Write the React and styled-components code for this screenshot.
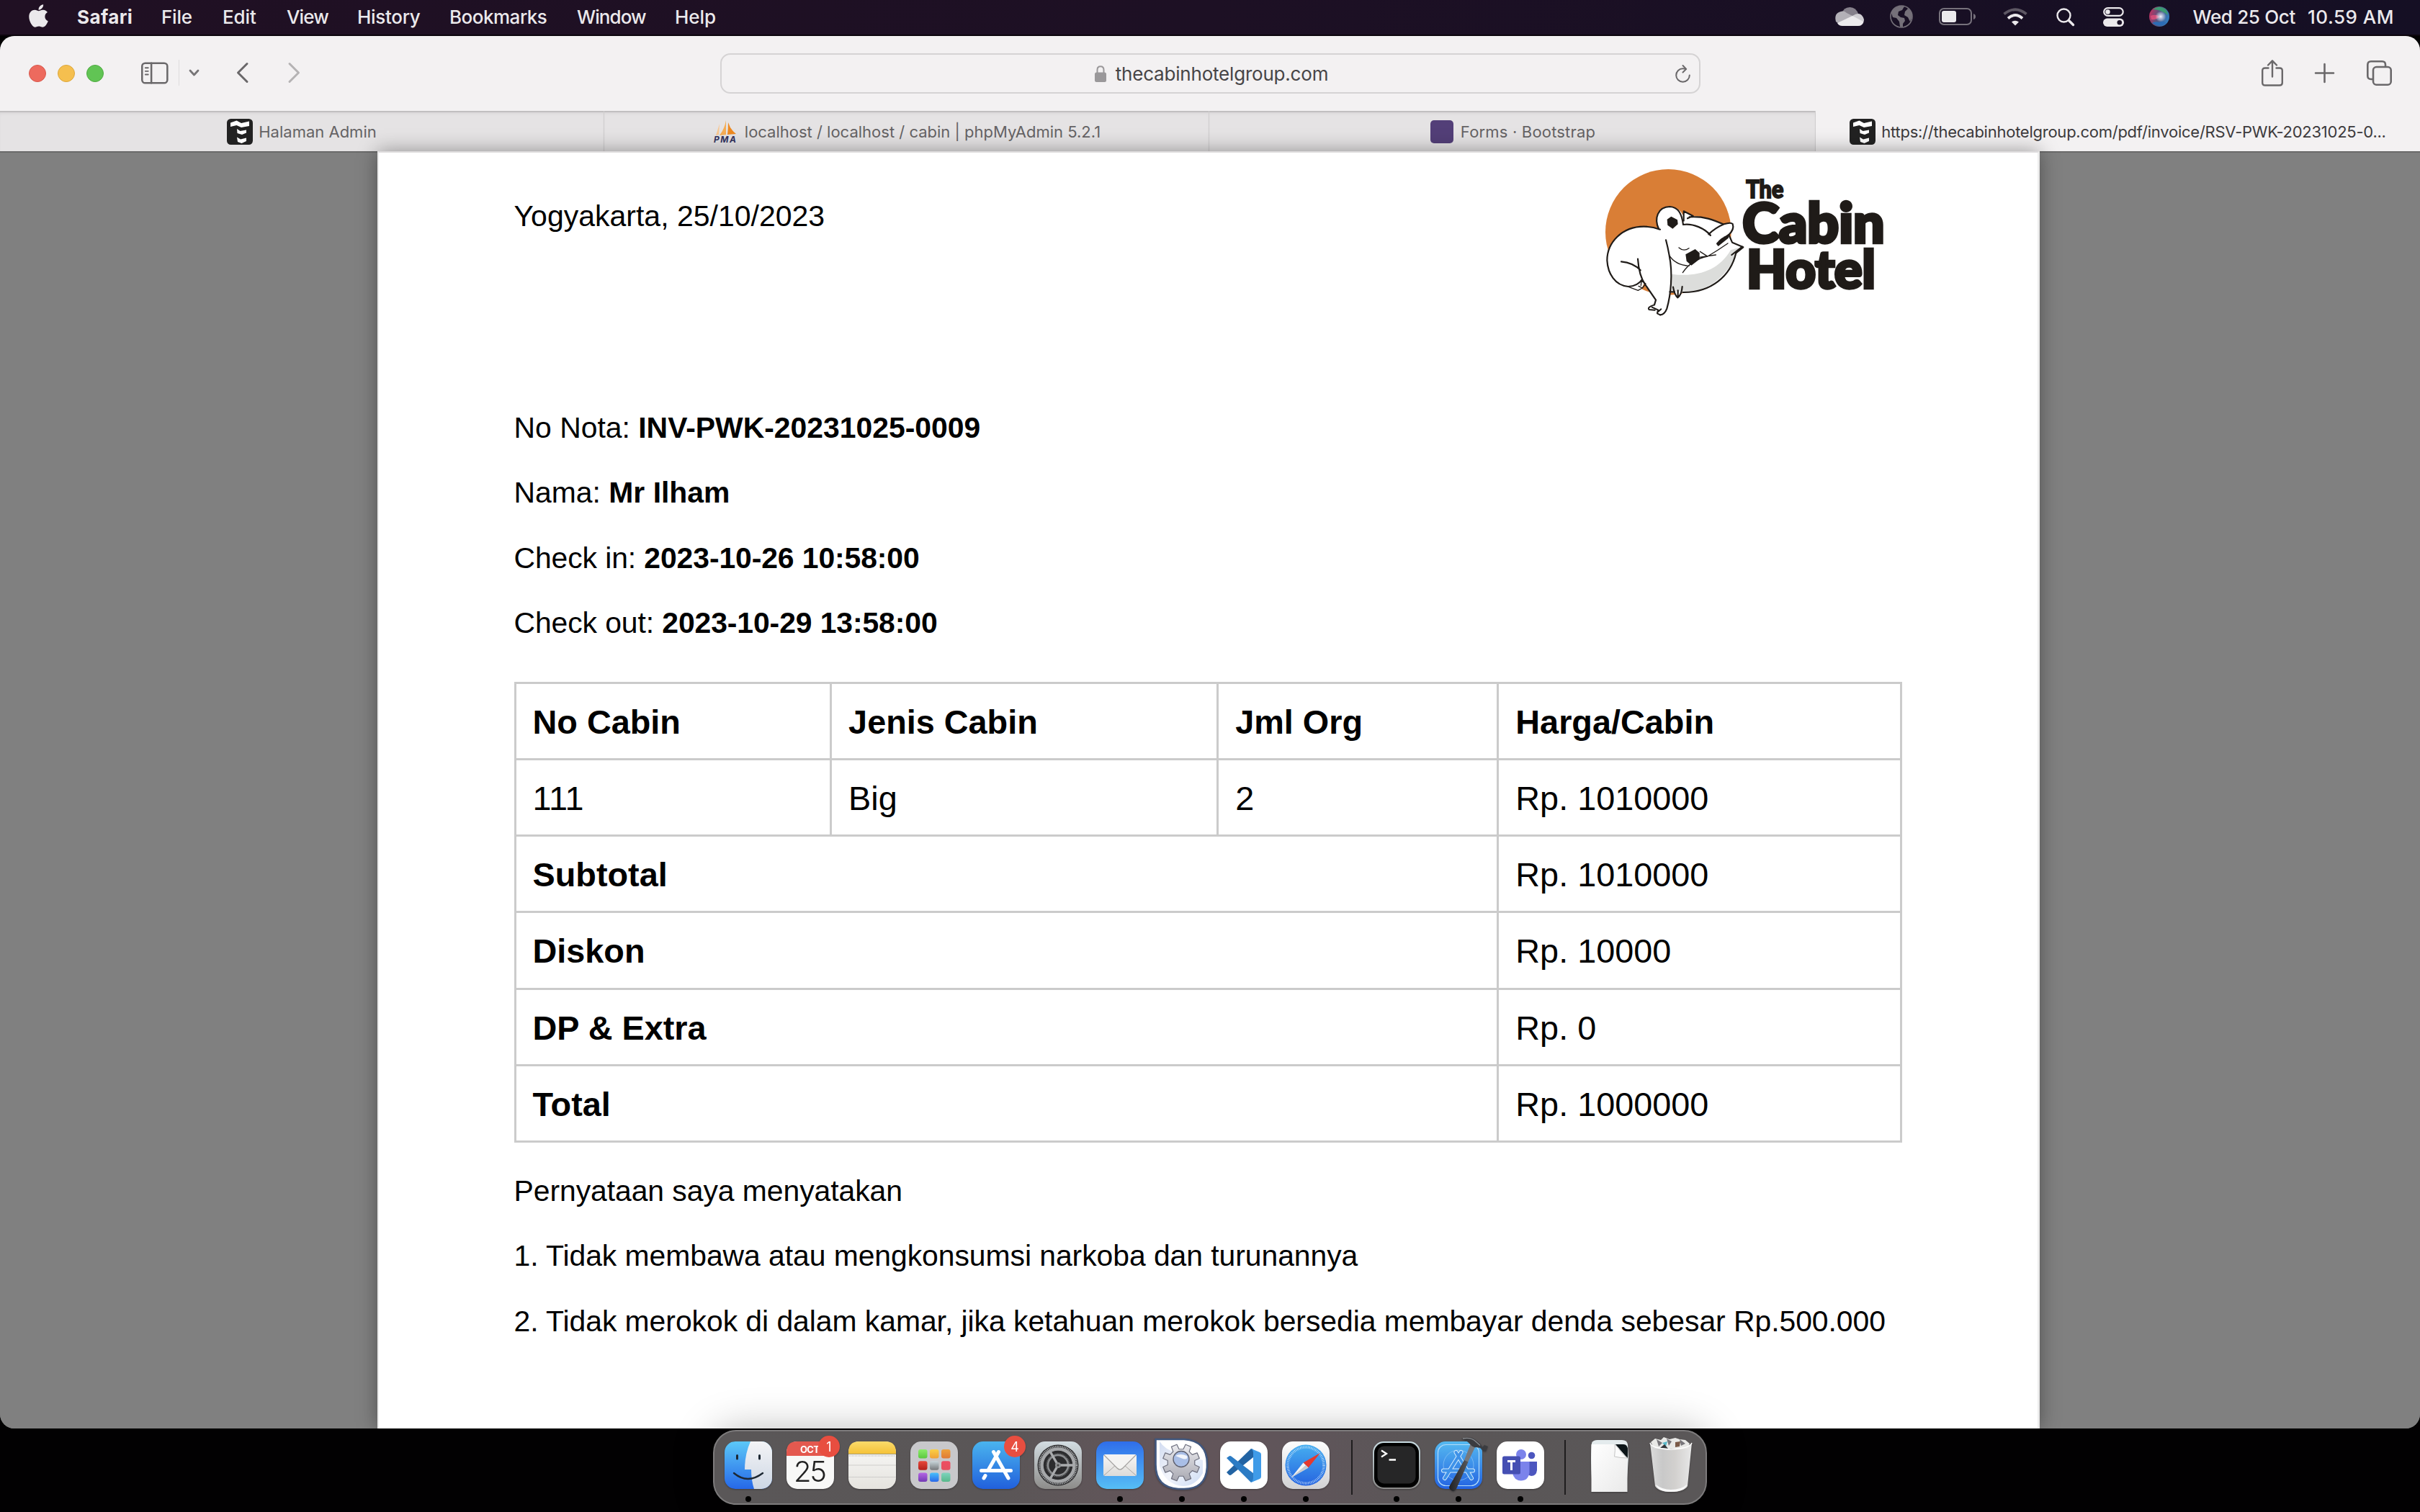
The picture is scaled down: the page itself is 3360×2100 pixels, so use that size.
import React from "react";
import styled, { createGlobalStyle } from "styled-components";
import { FaApple } from "react-icons/fa";

const GlobalStyle = createGlobalStyle`
  * { box-sizing: border-box; }
  body { margin: 0; background: #020102; }
`;

const ui = `Inter, "Noto Sans", sans-serif`;
const doc = `"Liberation Sans", Arial, sans-serif`;

/* ---------- desktop ---------- */

const Desktop = styled.div`
  width: 3360px;
  height: 2100px;
  display: flex;
  flex-direction: column;
  align-items: stretch;
  overflow: hidden;
  background: #020102;
  font-family: ${ui};
`;

/* ---------- menu bar ---------- */

const MenuBar = styled.header`
  height: 50px;
  flex: none;
  padding: 0 36px 2px 41px;
  display: flex;
  align-items: center;
  justify-content: space-between;
  background: linear-gradient(90deg, #201023 0%, #1d1024 50%, #150f24 100%);
  border-bottom: 2px solid #0c050d;
  color: #ebe9ec;
  font-size: 26px;
  font-weight: 500;
  line-height: 45px;
  white-space: pre;
`;

const MenuGroup = styled.nav`
  display: flex;
  align-items: center;
`;

const AppleMenu = styled.span`
  width: 66px;
  height: 45px;
  display: flex;
  align-items: center;
  padding-bottom: 2px;
  svg { width: 27px; height: 36px; margin-left: -1px; }
`;

const MenuItem = styled.span`
  width: ${(p) => p.$w}px;
  font-weight: ${(p) => (p.$bold ? 700 : 500)};
  letter-spacing: ${(p) => p.$ls}px;
`;

const StatusIcon = styled.svg`
  flex: none;
  overflow: visible;
  margin-right: ${(p) => p.$after}px;
`;

const ClockPart = styled.span`
  letter-spacing: ${(p) => p.$ls}px;
  margin-left: ${(p) => p.$before || 0}px;
`;

/* ---------- browser window ---------- */

const BrowserWindow = styled.main`
  height: 1934px;
  flex: none;
  display: flex;
  flex-direction: column;
  border-radius: 20px;
  overflow: hidden;
  background: #808080;
`;

const Toolbar = styled.div`
  height: 104px;
  flex: none;
  padding: 0 39px 0 40px;
  display: grid;
  grid-template-columns: 1fr 1361px 1fr;
  align-items: center;
  background: #f3f1f2;
  color: #6a686a;
`;

const ToolGroup = styled.div`
  display: flex;
  align-items: center;
  justify-content: ${(p) => (p.$end ? "flex-end" : "flex-start")};
  padding-bottom: 2px;
`;

const TrafficLight = styled.span`
  width: 24px;
  height: 24px;
  margin: 2px 16px 0 0;
  border-radius: 50%;
  background: ${(p) => p.$color};
  border: 1px solid ${(p) => p.$rim};
`;

const ToolIcon = styled.svg`
  flex: none;
  overflow: visible;
  fill: none;
  stroke: ${(p) => p.$tone || "#6a686a"};
  stroke-linecap: round;
  stroke-linejoin: round;
  margin-left: ${(p) => p.$before || 0}px;
`;

const ToolDivider = styled.span`
  width: 1px;
  height: 36px;
  margin-left: 14px;
  background: #dedcdd;
`;

const AddressBar = styled.div`
  height: 56px;
  display: grid;
  grid-template-columns: 1fr auto 1fr;
  align-items: center;
  padding: 1px 12px 0 14px;
  border: 2px solid #d5d3d4;
  border-radius: 14px;
  color: #474547;
`;

const AddressText = styled.div`
  display: flex;
  align-items: center;
  gap: 12px;
  grid-column: 2;
  font-size: 26px;
  line-height: 50px;
  letter-spacing: -0.2px;
`;

const ReloadSlot = styled.div`
  display: flex;
  justify-content: flex-end;
`;

const TabBar = styled.div`
  height: 56px;
  flex: none;
  display: grid;
  grid-template-columns: 839px 840px 842px 1fr;
  background: #e5e3e4;
`;

const Tab = styled.div`
  display: flex;
  align-items: center;
  justify-content: center;
  gap: ${(p) => p.$gap || 8}px;
  padding: 2px 0 0 ${(p) => p.$shift || 0}px;
  min-width: 0;
  white-space: nowrap;
  font-size: 22px;
  line-height: 40px;
  letter-spacing: ${(p) => p.$ls || 0}px;
  color: ${(p) => (p.$active ? "#3c3a3c" : "#656365")};
  background: ${(p) => (p.$active ? "#f3f1f2" : "transparent")};
  border-right: ${(p) => (p.$active ? "none" : "1px solid #cfcdce")};
  box-shadow: ${(p) => (p.$active ? "none" : "inset 0 2px 0 #c1bfc0, inset 0 5px 4px -2px #d4d2d3")};
`;

const Favicon = styled.svg`
  flex: none;
  overflow: visible;
`;

/* ---------- document ---------- */

const Viewer = styled.div`
  flex: 1;
  min-height: 0;
  display: flex;
  justify-content: center;
  padding-right: 4px;
  background: #808080;
  box-shadow: inset 0 2px 0 #6a6a6a;
`;

const Sheet = styled.article`
  width: 2308px;
  padding: 0 187px 0 187.5px;
  background: #fff;
  border: solid #ececec;
  border-width: 0 3px 0 2px;
  border-top: 2px solid #dddbdc;
  box-shadow: 0 0 26px rgba(0, 0, 0, 0.38);
  color: #000;
  font-family: ${doc};
`;

const SheetHeader = styled.header`
  height: 337px;
  display: flex;
  justify-content: space-between;
  align-items: flex-start;
`;

const DateLine = styled.p`
  margin: 43px 0 0;
  font-size: 41px;
  line-height: 90.3px;
`;

const Logo = styled.svg`
  flex: none;
  width: 450px;
  height: 248px;
  margin-right: -7px;
`;

const Line = styled.p`
  margin: 0;
  font-size: 40.9px;
  line-height: 90.3px;
  white-space: nowrap;
  letter-spacing: ${(p) => p.$ls || 0}px;
`;

const Table = styled.table`
  width: 1927px;
  margin: 37px 0 22px 0;
  border-collapse: collapse;
  table-layout: fixed;
  font-size: 46.8px;
  line-height: 60px;
`;

const Row = styled.tr`
  height: ${(p) => p.$h || 106}px;
`;

const Cell = styled.td`
  border: 3px solid #cbcbcb;
  padding: 2px 0 0 23px;
  text-align: left;
  vertical-align: middle;
  font-weight: ${(p) => (p.$bold ? 700 : 400)};
`;

/* ---------- dock ---------- */

const Dock = styled.footer`
  position: relative;
  align-self: center;
  flex: none;
  width: 1380px;
  height: 104px;
  margin-top: 2px;
  padding: 14px 14px 0;
  display: flex;
  align-items: flex-start;
  gap: 20px;
  border: 2px solid #7d7b7c;
  border-radius: 32px;
  background: linear-gradient(90deg, #5a5758 0%, #5a5657 28%, #63555a 45%, #5f555a 60%, #5a5657 72%, #5a5758 100%);
  box-shadow: 0 0 56px rgba(0, 0, 0, 0.27);
`;

const DockItem = styled.div`
  width: 66px;
  display: flex;
  flex-direction: column;
  align-items: center;
  gap: 10px;
`;

const DockIcon = styled.svg`
  width: 66px;
  height: 66px;
  overflow: visible;
  filter: drop-shadow(0 1px 1px rgba(0, 0, 0, 0.3));
`;

const RunningDot = styled.span`
  width: 8px;
  height: 8px;
  border-radius: 50%;
  background: #000;
`;

const DockDivider = styled.span`
  width: 2px;
  height: 76px;
  margin: -2px 8px 0 ${(p) => p.$left}px;
  background: #1f1d1e;
`;

/* ---------- drawings ---------- */

const CabinFavicon = () => (
  <Favicon width="36" height="36" viewBox="0 0 36 36">
    <rect width="36" height="36" rx="5.5" fill="#222" />
    <path d="M5 5.500L13.500 2.500L20 6L31 3.500V10L20 12L13.500 9L5 11Z" fill="#fff" />
    <path d="M14 14L18.500 17L27 15.500V19.500L21 22L14.500 20Z" fill="#fff" />
    <path d="M14 25.500L19 28.500L27 26.500V31L20.500 34L15 32Z" fill="#fff" />
  </Favicon>
);

const PmaFavicon = () => (
  <Favicon width="32" height="32" viewBox="0 0 32 32">
    <path d="M8 5L3 21L7 20Z" fill="#f9c790" />
    <path d="M17 0Q15 12 8 21L17 20Z" fill="#f5ad55" />
    <path d="M20 3Q20 13 19 20L31 19Q23 13 20 3Z" fill="#ee8a22" />
    <text x="0" y="31" fontFamily="Inter, sans-serif" fontSize="12" fontWeight="700" fontStyle="italic" fill="#33335f" textLength="31">PMA</text>
  </Favicon>
);

const BootstrapFavicon = () => (
  <Favicon width="32" height="32" viewBox="0 0 32 32">
    <rect width="32" height="32" rx="5" fill="#533f78" />
  </Favicon>
);

const HotelLogo = () => (
  <Logo viewBox="0 6 1350 744">
    <circle cx="352" cy="337" r="262" fill="#d97e36" />
    <path
      d="M102 408C135 345 190 312 252 313Q290 314 316 324C290 280 305 232 358 231Q398 234 414 268L416 248L456 270C510 272 555 290 582 304Q610 296 620 300Q630 312 604 350L620 380L662 398L634 428C610 520 540 592 405 590L392 608L378 588L358 590Q354 640 342 664Q330 682 318 682L268 652L300 622L250 552L240 575Q215 590 190 565C120 555 80 480 102 408Z"
      fill="#fff"
    />
    <path d="M366 512C470 526 560 500 612 412L644 402C640 440 600 500 560 534Q495 590 405 584L364 582Z" fill="#dcdddb" />
    <g fill="none" stroke="#1f1b18" strokeWidth="6.500" strokeLinecap="round" strokeLinejoin="round">
      <path d="M318 326Q285 314 250 314C160 314 97 380 97 455C100 510 130 560 185 564Q225 562 243 534" />
      <path d="M312 324C292 280 308 232 358 231C395 233 408 262 414 306C455 300 505 322 528 351" />
      <path d="M416 250V290M416 250L455 270L432 280M440 274C500 270 540 286 580 304" />
      <path d="M520 346Q550 318 584 304Q612 295 620 303Q628 325 604 348Q580 362 556 384" />
      <path d="M604 348L618 380L664 400L634 424" />
      <path d="M634 424C612 520 530 590 412 588M378 586L358 586" />
      <path d="M372 566Q378 600 391 610Q408 598 410 564M392 580V606" />
      <path d="M342 370Q350 400 356 434C372 510 362 600 346 656Q336 682 318 682" />
      <path d="M356 434Q380 474 438 478M412 506Q450 450 516 438Q560 412 600 384M480 442L550 432M396 402Q416 420 438 404M484 418L512 436" strokeWidth="4" />
      <path d="M156 460Q205 464 236 496M225 449Q230 520 256 556L300 620L294 640" />
      <path d="M294 640Q262 650 272 660L296 662M284 650L310 662L306 672L322 658M318 682L306 676" strokeWidth="6" />
      <path d="M188 566L226 580L244 570L228 562M244 570L258 552L240 540L238 560" strokeWidth="4" />
      <path d="M660 398L616 432" />
    </g>
    <path d="M347 284L364 272L390 286L392 304L370 323L349 308Z" fill="#1f1b18" />
    <path d="M424 430L464 408L482 424V450L448 476L428 458Z" fill="#1f1b18" />
    <path d="M552 386Q570 356 606 350L602 362L560 396Z" fill="#1f1b18" />
    <g fontFamily="Lato, sans-serif" fontWeight="900" fill="#1f1b18" stroke="#1f1b18" strokeLinejoin="miter">
      <text x="676" y="196" fontSize="102" strokeWidth="6" textLength="156" lengthAdjust="spacingAndGlyphs">The</text>
      <text x="661" y="380" fontSize="228" strokeWidth="13" textLength="592" lengthAdjust="spacingAndGlyphs">Cabin</text>
      <text x="678" y="570" fontSize="216" strokeWidth="13" textLength="536" lengthAdjust="spacingAndGlyphs">Hotel</text>
    </g>
  </Logo>
);

const tile = (fill) => <rect width="66" height="66" rx="15" fill={fill} />;

const Gradient = ({ id, from, to }) => (
  <linearGradient id={id} x1="0" y1="0" x2="0" y2="1">
    <stop offset="0" stopColor={from} />
    <stop offset="1" stopColor={to} />
  </linearGradient>
);

const Badge = ({ n }) => (
  <g>
    <circle cx="59" cy="7" r="15" fill="#e84e40" />
    <text x="59" y="13.5" textAnchor="middle" fontFamily="Inter, sans-serif" fontSize="18" fill="#fff">{n}</text>
  </g>
);

const FinderIcon = () => (
  <DockIcon viewBox="0 0 66 66">
    <defs>
      <Gradient id="finderA" from="#5bc8f8" to="#2668e8" />
      <Gradient id="finderB" from="#f4f4f6" to="#cdd7e4" />
      <clipPath id="finderClip"><rect width="66" height="66" rx="15" /></clipPath>
    </defs>
    <g clipPath="url(#finderClip)">
      <rect width="66" height="66" fill="url(#finderA)" />
      <path d="M36 0Q28 18 28 39H37Q37 54 41 66H66V0Z" fill="url(#finderB)" />
    </g>
    <path d="M17.5 19.500V24M48.500 19.500V24" stroke="#1d2833" strokeWidth="3" strokeLinecap="round" />
    <path d="M13 44Q32 60 53 44" fill="none" stroke="#1d2833" strokeWidth="2.4" strokeLinecap="round" />
  </DockIcon>
);

const CalendarIcon = () => (
  <DockIcon viewBox="0 0 66 66">
    {tile("#f8f8f7")}
    <path d="M0 20V15Q0 0 15 0H51Q66 0 66 15V20Z" fill="#e4594f" />
    <text x="19" y="16" fontFamily="Inter, sans-serif" fontSize="13" fontWeight="700" fill="#fff" textLength="27">OCT</text>
    <text x="33" y="55.500" textAnchor="middle" fontFamily="Inter, sans-serif" fontSize="40" fontWeight="300" fill="#222" textLength="46">25</text>
    <Badge n="1" />
  </DockIcon>
);

const NotesIcon = () => (
  <DockIcon viewBox="0 0 66 66">
    <defs>
      <Gradient id="notesA" from="#fbdb6b" to="#f5c238" />
      <Gradient id="notesB" from="#fafaf9" to="#e5e3de" />
    </defs>
    {tile("url(#notesB)")}
    <path d="M0 17V15Q0 0 15 0H51Q66 0 66 15V17Z" fill="url(#notesA)" />
    <path d="M0 17.500H66" stroke="#a59a73" strokeWidth="1" />
    <path d="M1 20H65" stroke="#c4c2be" strokeWidth="1.600" strokeDasharray="1 1" />
    <path d="M0 33H66M0 49.500H66" stroke="#cfcecc" strokeWidth="1" />
  </DockIcon>
);

const LAUNCHPAD = [
  ["#8cec6a", "#5bc83e"], ["#fad045", "#f0a136"], ["#eea13b", "#e07a35"],
  ["#e8483a", "#b3211b"], ["#c9d6da", "#76797b"], ["#ee4d62", "#e5505e"],
  ["#b566e4", "#7339b5"], ["#48c0fa", "#2a69ea"], ["#7ed3bd", "#59b98c"],
];

const LaunchpadIcon = () => (
  <DockIcon viewBox="0 0 66 66">
    {tile("#c8c8cb")}
    {LAUNCHPAD.map(([a, b], i) => (
      <g key={a}>
        <defs><Gradient id={`pad${i}`} from={a} to={b} /></defs>
        <rect x={11 + (i % 3) * 16} y={11 + Math.floor(i / 3) * 16.200} width="12.500" height="12.500" rx="3" fill={`url(#pad${i})`} />
      </g>
    ))}
  </DockIcon>
);

const AppStoreIcon = () => (
  <DockIcon viewBox="0 0 66 66">
    <defs><Gradient id="storeA" from="#4ab4ee" to="#2160dc" /></defs>
    {tile("url(#storeA)")}
    <g stroke="#fff" strokeWidth="5" strokeLinecap="round">
      <path d="M12.500 40.500H53.500M36.500 14.500L22 40M18 47.500L16 51M29.500 14.500L50 51" />
    </g>
    <Badge n="4" />
  </DockIcon>
);

const SettingsIcon = () => (
  <DockIcon viewBox="0 0 66 66">
    <defs><Gradient id="setA" from="#d3dde2" to="#8d8c8a" /></defs>
    {tile("url(#setA)")}
    <circle cx="33" cy="33" r="28.500" fill="#2c2c2e" />
    <circle cx="33" cy="33" r="26" fill="none" stroke="#a3a5a7" strokeWidth="2.500" strokeDasharray="1.400 1" />
    <circle cx="33" cy="33" r="22.500" fill="none" stroke="#a5a7a9" strokeWidth="4.500" />
    <circle cx="33" cy="33" r="14" fill="none" stroke="#8c8e90" strokeWidth="2.500" />
    <circle cx="33" cy="33" r="15.800" fill="none" stroke="#77797b" strokeWidth="1.500" strokeDasharray="1.200 1" />
    <path d="M33 33H55M33 33L22 14M33 33L22 52" stroke="#a9abad" strokeWidth="3.400" />
    <circle cx="33" cy="33" r="4" fill="#8e9092" />
    <circle cx="33" cy="33" r="1.500" fill="#444" />
  </DockIcon>
);

const MailIcon = () => (
  <DockIcon viewBox="0 0 66 66">
    <defs>
      <Gradient id="mailA" from="#2f6eea" to="#56bef6" />
      <Gradient id="mailB" from="#f7f6f5" to="#dddbd9" />
    </defs>
    {tile("url(#mailA)")}
    <rect x="10" y="18" width="46" height="30" rx="2.500" fill="url(#mailB)" />
    <path d="M11 47L27 33M55 47L39 33" stroke="#a9a7a5" strokeWidth="1" />
    <path d="M11 19L29 37Q33 41 37 37L55 19" fill="#f4f3f2" stroke="#a3a19f" strokeWidth="1.200" />
  </DockIcon>
);

const gearPath = (cx, cy, teeth, inner, outer) => {
  const step = (Math.PI * 2) / teeth;
  const at = (r, a) => `${(cx + r * Math.cos(a)).toFixed(2)} ${(cy + r * Math.sin(a)).toFixed(2)}`;
  return (
    Array.from({ length: teeth }, (_, i) => {
      const a = i * step - Math.PI / 2 + step / 2;
      return `${i ? "L" : "M"}${at(inner, a - step * 0.3)}L${at(outer, a - step * 0.2)}L${at(outer, a + step * 0.2)}L${at(inner, a + step * 0.3)}`;
    }).join("") + "Z"
  );
};

const GearAppIcon = () => (
  <DockIcon viewBox="0 0 66 66">
    <defs>
      <linearGradient id="gearA" x1="0" y1="0" x2="1" y2="1">
        <stop offset="0" stopColor="#9db2e0" />
        <stop offset="0.500" stopColor="#e3e9f7" />
        <stop offset="1" stopColor="#8fb0e6" />
      </linearGradient>
      <Gradient id="gearB" from="#ececf0" to="#a9a9b2" />
    </defs>
    <path d="M-3.500 -3H36Q68 -1 68 31V36Q66 66 36 66H28Q-3.500 64 -3.500 32Z" fill="#fff" stroke="#41587f" strokeWidth="2.600" />
    <path d="M2 0Q10 12 25 15L62 26V44Q52 62 34 62Q10 60 2 34Z" fill="url(#gearA)" opacity="0.450" />
    <path d={gearPath(32, 29.500, 8, 19, 26)} fill="url(#gearB)" stroke="#6d6f7e" strokeWidth="1.200" strokeLinejoin="round" />
    <circle cx="32" cy="24.500" r="11" fill="#a9bee6" stroke="#5d5f6e" strokeWidth="1.300" />
    <path d="M24 20Q31 16 40 20Q42 26 34 24Z" fill="#f2f5fb" />
  </DockIcon>
);

const CodeIcon = () => (
  <DockIcon viewBox="0 0 66 66">
    {tile("#fff")}
    <path d="M9 43L12.500 46.500Q14 47.500 16 46L46 22V11L43 10Z" fill="#2263a3" />
    <path d="M9 23L12.500 20.500Q14 19.500 16 21L46 44V55L43 57Z" fill="#2b7bc4" />
    <path d="M43 10L55 15Q57 16 57 18V49Q57 51 55 52L43 57Q46 55 46 50V16Q46 12 43 10Z" fill="#3f9be8" />
  </DockIcon>
);

const SafariIcon = () => (
  <DockIcon viewBox="0 0 66 66">
    <defs>
      <Gradient id="safA" from="#fdfdfd" to="#d2d2d4" />
      <Gradient id="safB" from="#46aef0" to="#2664e0" />
    </defs>
    {tile("url(#safA)")}
    <circle cx="33" cy="33" r="28.500" fill="url(#safB)" />
    <circle cx="33" cy="33" r="25" fill="none" stroke="#d8ecfb" strokeWidth="3.500" strokeDasharray="0.700 1.483" />
    <path d="M53 16L36.500 36.500L29.500 29.500Z" fill="#e5382e" />
    <path d="M13 50L29.500 29.500L36.500 36.500Z" fill="#f4f4f4" />
    <path d="M13 50L33 33L36.500 36.500Z" fill="#c6cacf" />
  </DockIcon>
);

const TerminalIcon = () => (
  <DockIcon viewBox="0 0 66 66">
    <defs><Gradient id="termA" from="#c9dce2" to="#8b8a89" /></defs>
    {tile("url(#termA)")}
    <rect x="2" y="2" width="62" height="62" rx="13.500" fill="#000" />
    <rect x="6.500" y="6.500" width="53" height="52" rx="9" fill="#262627" />
    <path d="M12 12.500L19 17L12 21.500M22.500 25.500H32" fill="none" stroke="#fff" strokeWidth="2.300" />
  </DockIcon>
);

const XcodeIcon = () => (
  <DockIcon viewBox="0 0 66 66">
    <defs>
      <Gradient id="xcA" from="#55b9f0" to="#2363e2" />
      <linearGradient id="xcB" x1="0" y1="0" x2="1" y2="0">
        <stop offset="0" stopColor="#1f2023" /><stop offset="1" stopColor="#57585c" />
      </linearGradient>
    </defs>
    {tile("url(#xcA)")}
    <rect x="4.500" y="4.500" width="57" height="57" rx="11" fill="none" stroke="#b4dcf8" strokeWidth="1.200" />
    <circle cx="33" cy="33" r="21" fill="none" stroke="#8cc4f3" strokeWidth="0.700" />
    <g fill="none" strokeLinecap="round">
      <path d="M12 40.500H53M36.500 15L14 51M29.500 15L51 51" stroke="#d4ecfc" strokeWidth="6" />
      <path d="M12 40.500H53M36.500 15L14 51M29.500 15L51 51" stroke="#3f92e8" strokeWidth="4" />
    </g>
    <path d="M50 3L57 6L46 29L41 26Z" fill="#77797d" />
    <path d="M41 26L46.500 28.500L30 66Q27 71 23 68Q19 66 20.500 62Z" fill="url(#xcB)" />
    <path d="M37 -3.500Q49 -9 58 -1L64 4L66 8L69 5L74 7L71 14L67 13L63 9L57 8Q54 9 50 5Q46 -1 37 -3.500Z" fill="#3b3c40" />
    <path d="M39 -4Q51 -6.500 58 1L63 5.500" fill="none" stroke="#8b8d91" strokeWidth="1.300" />
  </DockIcon>
);

const TeamsIcon = () => (
  <DockIcon viewBox="0 0 66 66">
    {tile("#fff")}
    <circle cx="48.500" cy="19.500" r="4.800" fill="#4c56bf" />
    <path d="M42 28H56V40Q55 48 48 48L42 46Z" fill="#4c56bf" />
    <circle cx="34" cy="18" r="7" fill="#7b83eb" />
    <path d="M22 28H45.500V43Q44 54.500 33.500 54.500Q24 54 22 44Z" fill="#7b83eb" />
    <rect x="8" y="20.500" width="25" height="25" rx="2.500" fill="#454fb3" />
    <path d="M15 27.500H26M20.500 27.500V40" stroke="#fff" strokeWidth="3" fill="none" />
  </DockIcon>
);

const DocumentIcon = () => (
  <DockIcon viewBox="0 0 66 66">
    <defs>
      <linearGradient id="docA" x1="0" y1="0" x2="1" y2="1">
        <stop offset="0" stopColor="#fff" /><stop offset="1" stopColor="#e9e9e9" />
      </linearGradient>
    </defs>
    <path d="M8 2Q10 -2 16 -2H50Q57 -2 58 4L59 22L57 52H8Q6 20 8 2Z" fill="#e4ebed" />
    <path d="M41 4H52Q58 4 58 12V24Z" fill="#0c1518" />
    <path d="M7.500 4H40L57.500 23V70H7.500Z" fill="url(#docA)" />
    <path d="M40 4Q41 12 39.500 21Q48 23 57.500 23Q52 19 49 15Q45 9 40 4Z" fill="#fbfbfb" stroke="#c5c5c5" strokeWidth="1" />
  </DockIcon>
);

const TrashIcon = () => (
  <DockIcon viewBox="0 0 66 66">
    <defs>
      <linearGradient id="trA" x1="0" y1="0" x2="1" y2="0">
        <stop offset="0" stopColor="#e2e2e2" /><stop offset="0.300" stopColor="#cfcfcf" />
        <stop offset="0.600" stopColor="#d9d7d5" /><stop offset="1" stopColor="#efefef" />
      </linearGradient>
    </defs>
    <path d="M4 1L10 -4L18 -2L22 -6L30 -3L38 -5L44 -3L52 -2L58 3L55 10H9Z" fill="#e8e8e6" />
    <path d="M12 -3L20 2L15 7ZM26 -4L33 0L29 6ZM44 -3L52 3L46 6Z" fill="#77757a" />
    <path d="M38 1L45 0L44 7L38 8Z" fill="#7a5a48" />
    <path d="M20 2L27 0L25 7Z" fill="#58b9c9" />
    <path d="M17 9L23 4L28 10Z" fill="#33353a" />
    <path d="M3 2Q5 9 32 11Q58 9 61 2L55 62Q50 70 32 70Q15 70 10 62Z" fill="url(#trA)" opacity="0.960" />
    <path d="M3 2Q5 10 32 11Q58 10 61 2" fill="none" stroke="#fff" strokeWidth="1.500" />
    <path d="M11 60Q20 67 32 67Q46 67 54 60Q51 70 32 70Q14 70 11 60Z" fill="#f8f8f8" />
  </DockIcon>
);

/* ---------- data ---------- */

const MENUS = [
  { label: "Safari", w: 117, ls: 0.4, bold: true },
  { label: "File", w: 85, ls: -0.2 },
  { label: "Edit", w: 89, ls: -0.1 },
  { label: "View", w: 98, ls: -0.9 },
  { label: "History", w: 128, ls: -0.3 },
  { label: "Bookmarks", w: 177, ls: -0.5 },
  { label: "Window", w: 136, ls: -0.9 },
  { label: "Help", w: 60, ls: -0.1 },
];

const DETAILS = [
  ["No Nota", "INV-PWK-20231025-0009"],
  ["Nama", "Mr Ilham"],
  ["Check in", "2023-10-26 10:58:00", -0.1],
  ["Check out", "2023-10-29 13:58:00", -0.1],
];

const SUMMARY = [
  ["Subtotal", "Rp. 1010000", 106],
  ["Diskon", "Rp. 10000", 107],
  ["DP & Extra", "Rp. 0", 106],
  ["Total", "Rp. 1000000", 106],
];

const DOCK = [
  [FinderIcon, true], [CalendarIcon], [NotesIcon], [LaunchpadIcon], [AppStoreIcon], [SettingsIcon],
  [MailIcon, true], [GearAppIcon, true], [CodeIcon, true], [SafariIcon, true],
  "recent",
  [TerminalIcon, true], [XcodeIcon, true], [TeamsIcon, true],
  "files",
  [DocumentIcon], [TrashIcon],
];

/* ---------- sections ---------- */

const SystemMenu = () => (
  <MenuBar>
    <MenuGroup>
      <AppleMenu><FaApple /></AppleMenu>
      {MENUS.map((m) => (
        <MenuItem key={m.label} $w={m.w} $ls={m.ls} $bold={m.bold}>{m.label}</MenuItem>
      ))}
    </MenuGroup>
    <MenuGroup>
      <StatusIcon width="40" height="26" viewBox="0 0 40 26" $after={36}>
        <path d="M9 10Q11 0 20.500 0Q29 0 32.500 10L20 16Z" fill="#85808b" />
        <path d="M1 20Q-2 8 8 6Q12 4.500 16 8L26 13L5 23Z" fill="#b3b0b7" />
        <path d="M24 12Q36 4 40 17Q40 22 37 24Z" fill="#cfcdd2" />
        <path d="M3 22L24 12L39 20Q38 26 32 26H10Q5 26 3 22Z" fill="#eceaed" />
      </StatusIcon>
      <StatusIcon width="32" height="32" viewBox="0 0 32 32" $after={36}>
        <circle cx="16" cy="16" r="15" fill="none" stroke="#757079" strokeWidth="1.600" />
        <path d="M9 3Q15 0 20 2L17 7L12 9L11 14L15 17L20 18L21 22L18 26L18 31L14 30L13 23L9 18L4 17L2 11Q4 6 9 3Z" fill="#757079" />
        <path d="M25 5L21 9L20 14L25 17L28 23Q31 18 31 14Q29 7 25 5Z" fill="#757079" />
      </StatusIcon>
      <StatusIcon width="51" height="24" viewBox="0 0 51 24" $after={38}>
        <rect x="1" y="1" width="44" height="22" rx="6" fill="none" stroke="#77727c" strokeWidth="2" />
        <rect x="4" y="4" width="20" height="16" rx="3" fill="#ebe9ec" />
        <path d="M48 8Q51 9 51 12Q51 15 48 16Z" fill="#77727c" />
      </StatusIcon>
      <StatusIcon width="34" height="25" viewBox="0 0 34 25" $after={40} fill="none" strokeWidth="3.800">
        <path d="M1.500 8.500Q17 -4 32.500 8.500" stroke="#5d5763" />
        <path d="M7 14.500Q17 5.500 27 14.500" stroke="#ebe9ec" />
        <path d="M12 19.500Q17 16 22 19.500L17 24.500Z" fill="#ebe9ec" />
      </StatusIcon>
      <StatusIcon width="25" height="25" viewBox="0 0 25 25" $after={40} fill="none" stroke="#ebe9ec" strokeLinecap="round">
        <circle cx="10.500" cy="10.500" r="9" strokeWidth="2.400" />
        <path d="M17.500 17.500L23.500 23.500" strokeWidth="3.400" />
      </StatusIcon>
      <StatusIcon width="29" height="27" viewBox="0 0 29 27" $after={35}>
        <rect x="1.200" y="1.200" width="26.500" height="10.600" rx="5.300" fill="none" stroke="#ebe9ec" strokeWidth="2.200" />
        <circle cx="6.500" cy="6.500" r="3.200" fill="#ebe9ec" />
        <rect x="0" y="15.500" width="29" height="11.500" rx="5.700" fill="#ebe9ec" />
        <circle cx="22.800" cy="21.200" r="3.300" fill="#1a1126" />
      </StatusIcon>
      <StatusIcon width="28" height="28" viewBox="0 0 28 28" $after={32}>
        <defs>
          <radialGradient id="siriA"><stop offset="0" stopColor="#fff" /><stop offset="0.250" stopColor="#dfe6f5" stopOpacity="0.800" /><stop offset="1" stopColor="#fff" stopOpacity="0" /></radialGradient>
          <linearGradient id="siriB" x1="0" y1="0.300" x2="1" y2="0.600"><stop offset="0" stopColor="#c23060" /><stop offset="0.450" stopColor="#58547e" /><stop offset="1" stopColor="#2f7fc4" /></linearGradient>
        </defs>
        <circle cx="14" cy="14" r="14" fill="url(#siriB)" />
        <path d="M5 4Q14 -3 23 4Q26 8 26 12Q16 4 5 4Z" fill="#3c9a72" />
        <path d="M4 23Q14 30 24 23Q18 19 14 22Q8 20 4 23Z" fill="#2c6cb5" />
        <path d="M2 13Q9 10 15 14Q10 19 3 18Z" fill="#e5507c" opacity="0.800" />
        <circle cx="16" cy="14" r="7.500" fill="url(#siriA)" />
      </StatusIcon>
      <ClockPart $ls={-0.33}>Wed 25 Oct</ClockPart>
      <ClockPart $ls={0.5} $before={17}>10.59 AM</ClockPart>
    </MenuGroup>
  </MenuBar>
);

const BrowserToolbar = () => (
  <Toolbar>
    <ToolGroup>
      <TrafficLight $color="#ed6a5e" $rim="#d8584d" />
      <TrafficLight $color="#f5bf4f" $rim="#dca73c" />
      <TrafficLight $color="#61c454" $rim="#4fab42" />
      <ToolIcon width="38" height="31" viewBox="0 0 39 31" strokeWidth="2.600" $before={36}>
        <rect x="1.300" y="1.300" width="36" height="28.400" rx="4.500" />
        <path d="M14.500 1.500V29.500" />
        <path d="M6 8H10M6 12.800H10M6 17.600H10" strokeWidth="2" />
      </ToolIcon>
      <ToolDivider />
      <ToolIcon width="13" height="8" viewBox="0 0 13 8" strokeWidth="2.800" $before={14} $tone="#777577">
        <path d="M1 1L6.500 7L12 1" />
      </ToolIcon>
      <ToolIcon width="15" height="28" viewBox="0 0 15 28" strokeWidth="3" $before={53}>
        <path d="M14 1.500L1.500 14L14 26.500" />
      </ToolIcon>
      <ToolIcon width="15" height="28" viewBox="0 0 15 28" strokeWidth="3" $before={57} $tone="#b5b3b4">
        <path d="M1 1.500L13.500 14L1 26.500" />
      </ToolIcon>
    </ToolGroup>
    <AddressBar>
      <AddressText>
        <svg width="18" height="23" viewBox="0 0 18 23">
          <rect x="1" y="9.500" width="16" height="13.500" rx="2.500" fill="#9a989a" />
          <path d="M4.500 10V6Q4.500 1.200 9 1.200T13.500 6V10" fill="none" stroke="#9a989a" strokeWidth="2" />
        </svg>
        thecabinhotelgroup.com
      </AddressText>
      <ReloadSlot>
        <ToolIcon width="21" height="25" viewBox="0 0 21 25" strokeWidth="2">
          <path d="M14.500 5.800Q12.500 5.200 10.500 5.200A9.300 9.300 0 1 0 19.800 14.500" />
          <path d="M10.500 1L15.200 5.900L10.500 10.500" />
        </ToolIcon>
      </ReloadSlot>
    </AddressBar>
    <ToolGroup $end>
      <ToolIcon width="30" height="37" viewBox="0 0 30 37" strokeWidth="2.400">
        <path d="M9.500 11.500H5Q1.200 11.500 1.200 15V32Q1.200 35.500 5 35.500H25Q28.800 35.500 28.800 32V15Q28.800 11.500 25 11.500H20.500" />
        <path d="M15 23.500V1.500M9 7.500L15 1.300L21 7.500" />
      </ToolIcon>
      <ToolIcon width="27" height="27" viewBox="0 0 27 27" strokeWidth="2.600" $before={44}>
        <path d="M13.500 1V26M1 13.500H26" />
      </ToolIcon>
      <ToolIcon width="35" height="35" viewBox="0 0 35 35" strokeWidth="2.600" $before={45}>
        <path d="M8.500 26H6Q1.300 26 1.300 21.500V6Q1.300 1.300 6 1.300H21.500Q26 1.300 26 6V8.500" />
        <rect x="9" y="9" width="24.700" height="24.700" rx="4.500" />
      </ToolIcon>
    </ToolGroup>
  </Toolbar>
);

const Tabs = () => (
  <TabBar>
    <Tab $gap={8}><CabinFavicon />Halaman Admin</Tab>
    <Tab $gap={11} $shift={2}><PmaFavicon />localhost / localhost / cabin | phpMyAdmin 5.2.1</Tab>
    <Tab $gap={10} $shift={2} $ls={0.18}><BootstrapFavicon />Forms · Bootstrap</Tab>
    <Tab $gap={8} $ls={-0.25} $active><CabinFavicon />https://thecabinhotelgroup.com/pdf/invoice/RSV-PWK-20231025-0...</Tab>
  </TabBar>
);

const Invoice = () => (
  <Sheet>
    <SheetHeader>
      <DateLine>Yogyakarta, 25/10/2023</DateLine>
      <HotelLogo />
    </SheetHeader>
    {DETAILS.map(([label, value, ls]) => (
      <Line key={label} $ls={ls}>{label}: <b>{value}</b></Line>
    ))}
    <Table>
      <colgroup>
        <col width="438.5" /><col width="537" /><col width="389" /><col width="559" />
      </colgroup>
      <tbody>
        <Row>
          {["No Cabin", "Jenis Cabin", "Jml Org", "Harga/Cabin"].map((h) => <Cell as="th" key={h} $bold>{h}</Cell>)}
        </Row>
        <Row>
          {["111", "Big", "2", "Rp. 1010000"].map((c) => <Cell key={c}>{c}</Cell>)}
        </Row>
        {SUMMARY.map(([label, amount, h]) => (
          <Row key={label} $h={h}>
            <Cell colSpan={3} $bold>{label}</Cell>
            <Cell>{amount}</Cell>
          </Row>
        ))}
      </tbody>
    </Table>
    <Line $ls={-0.06}>Pernyataan saya menyatakan</Line>
    <Line $ls={-0.06}>1. Tidak membawa atau mengkonsumsi narkoba dan turunannya</Line>
    <Line $ls={-0.05}>2. Tidak merokok di dalam kamar, jika ketahuan merokok bersedia membayar denda sebesar Rp.500.000</Line>
  </Sheet>
);

export default function App() {
  return (
    <Desktop>
      <GlobalStyle />
      <SystemMenu />
      <BrowserWindow>
        <BrowserToolbar />
        <Tabs />
        <Viewer><Invoice /></Viewer>
      </BrowserWindow>
      <Dock>
        {DOCK.map((entry, i) => {
          if (typeof entry === "string") return <DockDivider key={entry} $left={entry === "recent" ? 10 : 8} />;
          const [Icon, running] = entry;
          return (
            <DockItem key={i}>
              <Icon />
              {running && <RunningDot />}
            </DockItem>
          );
        })}
      </Dock>
    </Desktop>
  );
}
